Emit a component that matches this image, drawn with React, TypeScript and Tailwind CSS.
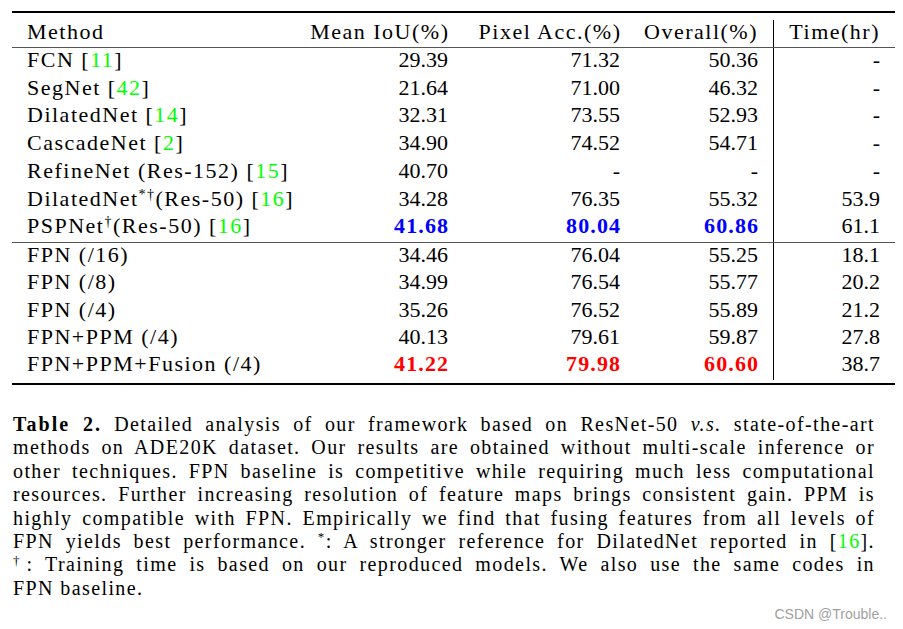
import type { ReactNode } from 'react';

type Best = 'blue' | 'red' | undefined;

type Entry = {
  method: ReactNode;
  iou: string;
  acc: string;
  overall: string;
  time: string;
  best?: Best;
};

function Ref({ n }: { n: string }) {
  return (
    <>
      [<span className="text-[#00ff00]">{n}</span>]
    </>
  );
}

const stateOfArt: Entry[] = [
  { method: <>FCN <Ref n="11" /></>, iou: '29.39', acc: '71.32', overall: '50.36', time: '-' },
  { method: <>SegNet <Ref n="42" /></>, iou: '21.64', acc: '71.00', overall: '46.32', time: '-' },
  { method: <>DilatedNet <Ref n="14" /></>, iou: '32.31', acc: '73.55', overall: '52.93', time: '-' },
  { method: <>CascadeNet <Ref n="2" /></>, iou: '34.90', acc: '74.52', overall: '54.71', time: '-' },
  { method: <>RefineNet (Res-152) <Ref n="15" /></>, iou: '40.70', acc: '-', overall: '-', time: '-' },
  {
    method: <>DilatedNet<sup className="text-[14px]">*†</sup>(Res-50) <Ref n="16" /></>,
    iou: '34.28', acc: '76.35', overall: '55.32', time: '53.9',
  },
  {
    method: <>PSPNet<sup className="text-[14px]">†</sup>(Res-50) <Ref n="16" /></>,
    iou: '41.68', acc: '80.04', overall: '60.86', time: '61.1', best: 'blue',
  },
];

const ours: Entry[] = [
  { method: 'FPN (/16)', iou: '34.46', acc: '76.04', overall: '55.25', time: '18.1' },
  { method: 'FPN (/8)', iou: '34.99', acc: '76.54', overall: '55.77', time: '20.2' },
  { method: 'FPN (/4)', iou: '35.26', acc: '76.52', overall: '55.89', time: '21.2' },
  { method: 'FPN+PPM (/4)', iou: '40.13', acc: '79.61', overall: '59.87', time: '27.8' },
  { method: 'FPN+PPM+Fusion (/4)', iou: '41.22', acc: '79.98', overall: '60.60', time: '38.7', best: 'red' },
];

function Num({ value, best }: { value: string; best?: Best }) {
  if (best === 'blue') return <span className="font-bold text-[#0000ff] tracking-[1.1px] mr-[-1.1px]">{value}</span>;
  if (best === 'red') return <span className="font-bold text-[#ff0000] tracking-[1.1px] mr-[-1.1px]">{value}</span>;
  return <span>{value}</span>;
}

function Row({ entry, height }: { entry: Entry; height: string }) {
  return (
    <div className={`grid grid-cols-[278px_158px_172px_154px_121px] leading-[23px] ${height}`}>
      <div className="pl-[15px] tracking-[1.5px] whitespace-nowrap">{entry.method}</div>
      <div className="text-right">
        <Num value={entry.iou} best={entry.best} />
      </div>
      <div className="text-right">
        <Num value={entry.acc} best={entry.best} />
      </div>
      <div className="text-right pr-[15px] border-r border-black">
        <Num value={entry.overall} best={entry.best} />
      </div>
      <div className="text-right pr-[15px]">{entry.time}</div>
    </div>
  );
}

function App() {
  return (
    <div className="relative w-[903px] h-[629px] bg-white text-black [font-family:'Liberation_Serif',serif] overflow-hidden">
      {/* table */}
      <div className="ml-[12px] pt-[11px] w-[883px] text-[22px]">
        <div className="h-[2px] bg-black" />
        <div className="h-[7px]" />
        <div className="grid grid-cols-[278px_158px_172px_154px_121px] leading-[23px] h-[27px] tracking-[1.5px]">
          <div className="pl-[15px]">Method</div>
          <div className="text-right mr-[-1.5px]">Mean IoU(%)</div>
          <div className="text-right mr-[-1.5px]">Pixel Acc.(%)</div>
          <div className="text-right pr-[15px] border-r border-black">Overall(%)</div>
          <div className="text-right pr-[15px]">Time(hr)</div>
        </div>
        <div className="h-px bg-[#555]" />
        {stateOfArt.map((e, i) => (
          <Row key={i} entry={e} height="h-[27.71px]" />
        ))}
        <div className="h-px bg-[#555]" />
        {ours.map((e, i) => (
          <Row key={i} entry={e} height="h-[27.4px]" />
        ))}
        <div className="h-[3px]" />
        <div className="h-[2px] bg-black" />
      </div>

      {/* caption */}
      <div className="ml-[13px] mt-[28px] w-[862px] text-[20px] leading-[23.4px] tracking-[1.4px]">
        <div className="text-justify [text-align-last:justify]">
          <span className="font-bold tracking-[2px]">Table 2.</span> Detailed analysis of our framework based on ResNet-50 <i>v.s.</i> state-of-the-art
        </div>
        <div className="text-justify [text-align-last:justify]">
          methods on ADE20K dataset. Our results are obtained without multi-scale inference or
        </div>
        <div className="text-justify [text-align-last:justify]">
          other techniques. FPN baseline is competitive while requiring much less computational
        </div>
        <div className="text-justify [text-align-last:justify]">
          resources. Further increasing resolution of feature maps brings consistent gain. PPM is
        </div>
        <div className="text-justify [text-align-last:justify]">
          highly compatible with FPN. Empirically we find that fusing features from all levels of
        </div>
        <div className="text-justify [text-align-last:justify]">
          FPN yields best performance. <sup className="text-[13px]">*</sup>: A stronger reference for DilatedNet reported in <Ref n="16" />.
        </div>
        <div className="text-justify [text-align-last:justify]">
          <sup className="text-[13px]">†</sup>: Training time is based on our reproduced models. We also use the same codes in
        </div>
        <div>FPN baseline.</div>
      </div>

      <div className="absolute right-[16px] bottom-[7px] text-[14px] leading-[16px] text-[#a0a0a0] [font-family:'Liberation_Sans',sans-serif]">
        CSDN @Trouble..
      </div>
    </div>
  );
}

export default App;
